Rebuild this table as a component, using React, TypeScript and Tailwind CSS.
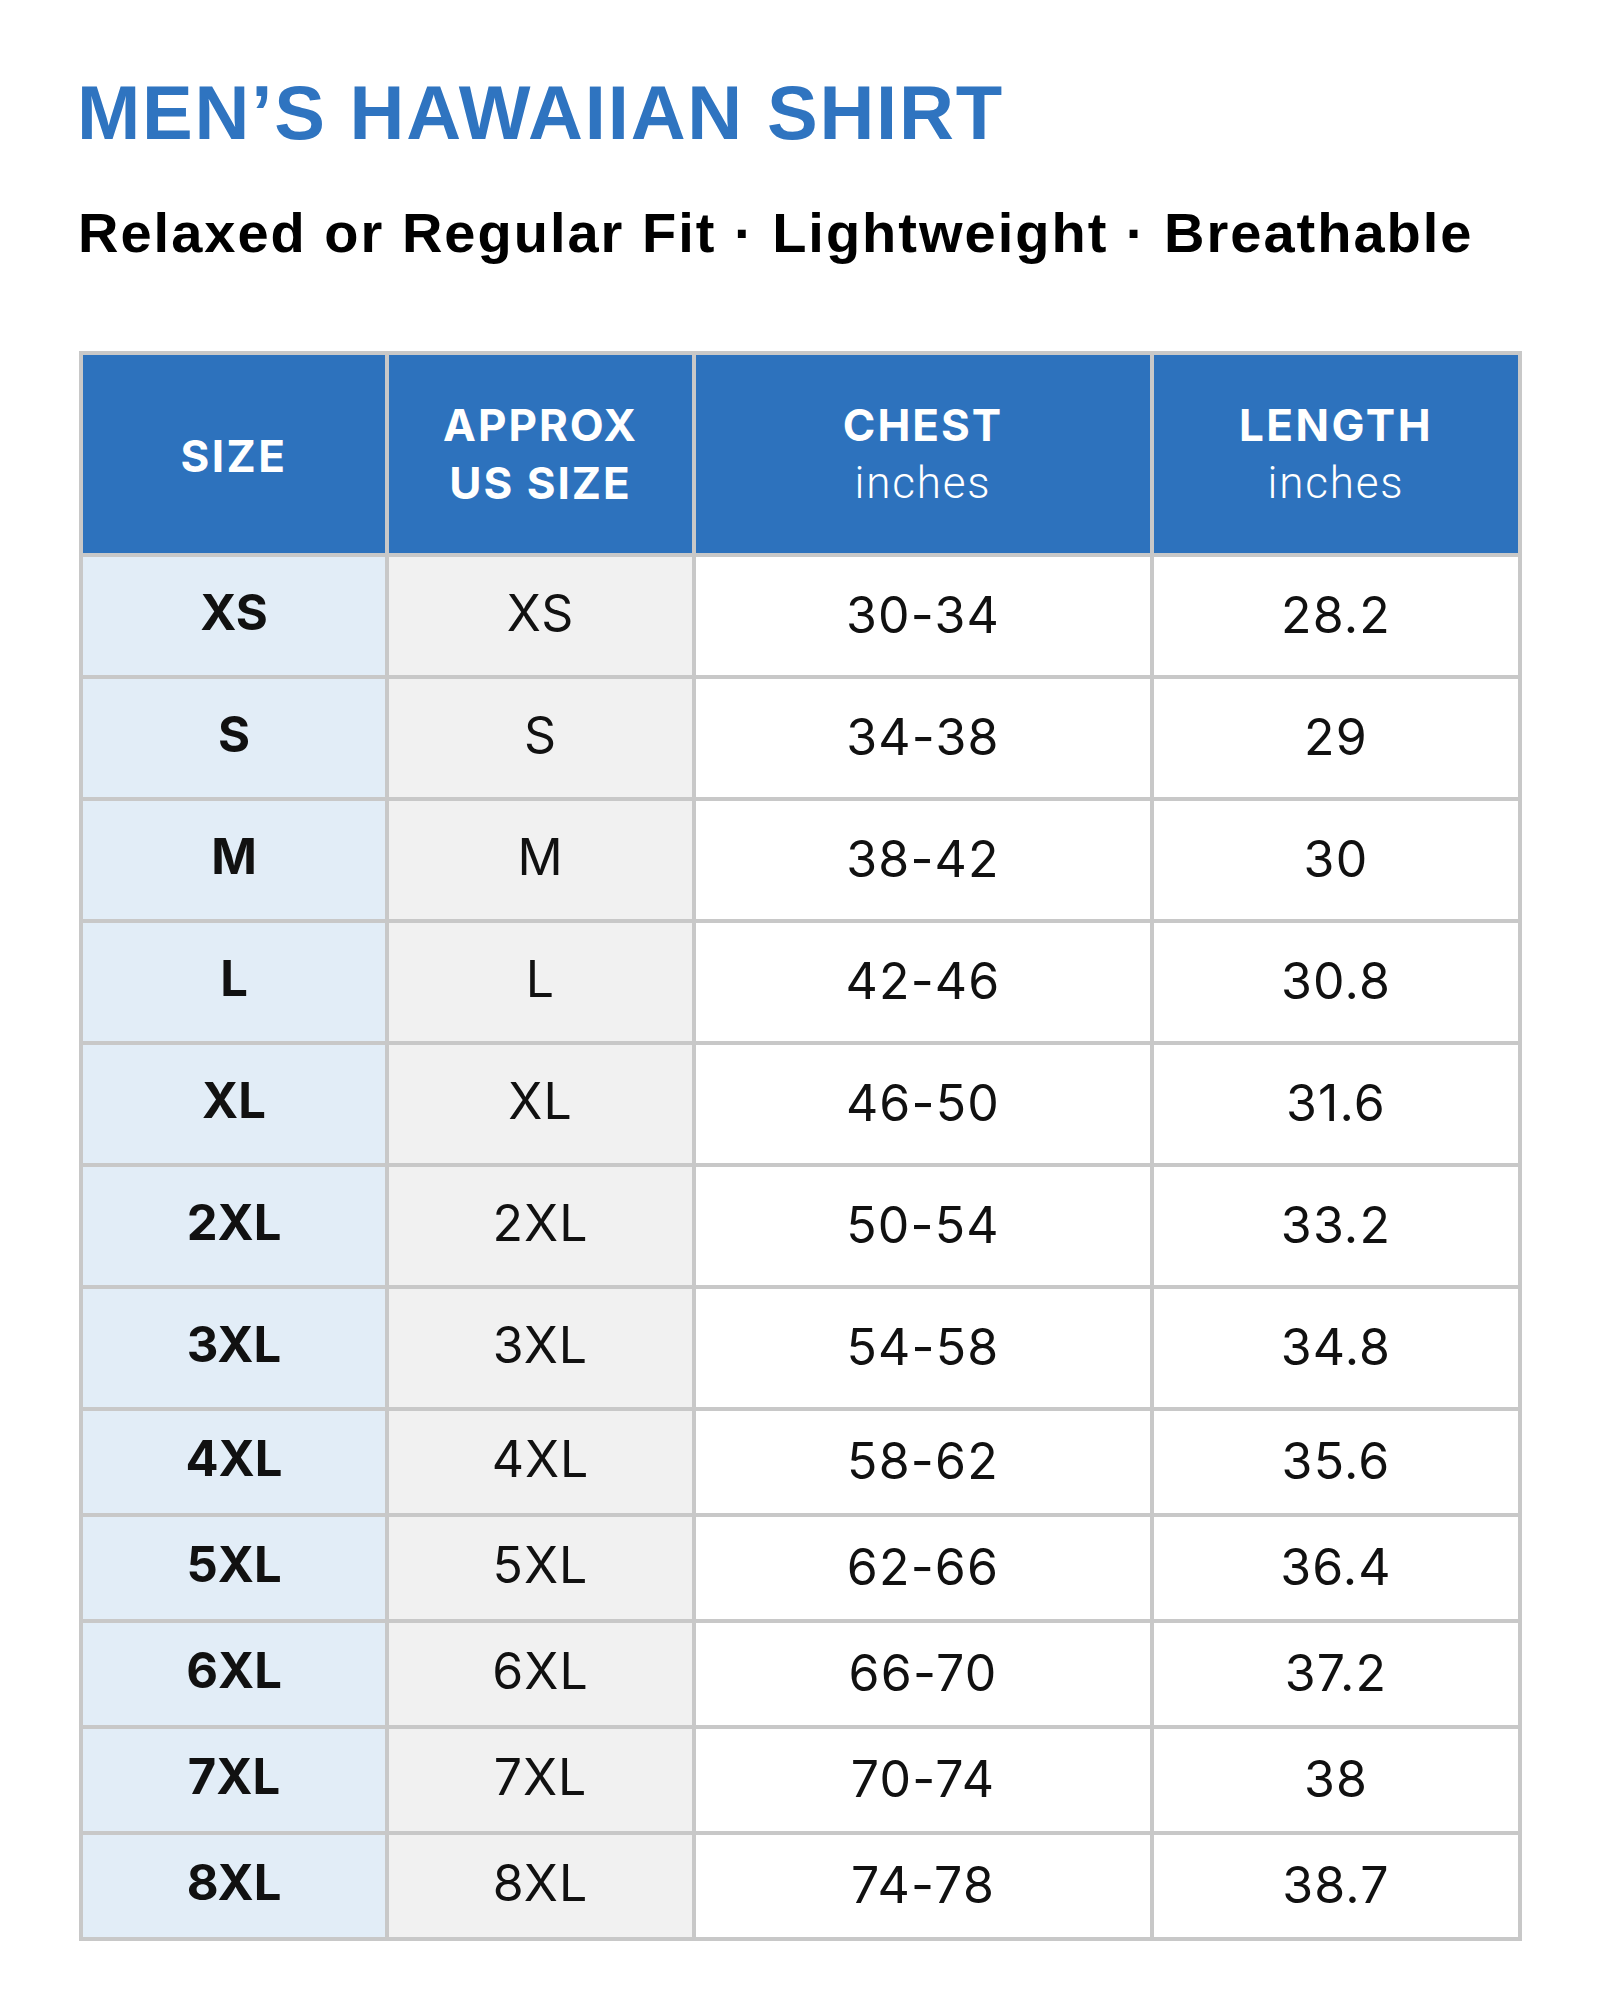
import React from "react";

const rows: [string, string, string, string][] = [
  ["XS", "XS", "30-34", "28.2"],
  ["S", "S", "34-38", "29"],
  ["M", "M", "38-42", "30"],
  ["L", "L", "42-46", "30.8"],
  ["XL", "XL", "46-50", "31.6"],
  ["2XL", "2XL", "50-54", "33.2"],
  ["3XL", "3XL", "54-58", "34.8"],
  ["4XL", "4XL", "58-62", "35.6"],
  ["5XL", "5XL", "62-66", "36.4"],
  ["6XL", "6XL", "66-70", "37.2"],
  ["7XL", "7XL", "70-74", "38"],
  ["8XL", "8XL", "74-78", "38.7"],
];

export default function App() {
  return (
    <div className="min-h-screen w-[1600px] bg-white pl-[79px] pt-[75px]">
      <h1 className="h-[76px] -ml-[2px] text-[76px] leading-none font-bold tracking-[1.8px] text-[#2f74c0] font-['Liberation_Sans',Arial,sans-serif] whitespace-nowrap">
        MEN’S HAWAIIAN SHIRT
      </h1>
      <p className="mt-[54px] h-[56px] -ml-[1px] text-[56px] leading-none font-bold tracking-[2px] text-black font-['Liberation_Sans',Arial,sans-serif] whitespace-nowrap">
        Relaxed or Regular Fit · Lightweight · Breathable
      </p>
      <div className="mt-[90px] w-fit grid grid-cols-[302px_303px_454px_364px] grid-rows-[198px_repeat(7,118px)_repeat(5,102px)] gap-[4px] p-[4px] bg-[#c8c8c8] font-['Inter',sans-serif]">
        <div className="bg-[#2d72bd] flex items-center justify-center text-white font-bold text-[44px] leading-[58px] tracking-[2.5px] pt-[4px]">
          SIZE
        </div>
        <div className="bg-[#2d72bd] flex flex-col items-center justify-center text-white font-bold text-[44px] leading-[58px] tracking-[2px] text-center">
          <span>APPROX</span>
          <span>US SIZE</span>
        </div>
        <div className="bg-[#2d72bd] flex flex-col items-center justify-center text-white text-center">
          <span className="font-bold text-[44px] leading-[58px] tracking-[2px]">CHEST</span>
          <span className="font-light text-[44px] leading-[58px] font-['Roboto',sans-serif] tracking-[1.8px]">inches</span>
        </div>
        <div className="bg-[#2d72bd] flex flex-col items-center justify-center text-white text-center">
          <span className="font-bold text-[44px] leading-[58px] tracking-[2.5px]">LENGTH</span>
          <span className="font-light text-[44px] leading-[58px] font-['Roboto',sans-serif] tracking-[1.8px]">inches</span>
        </div>
        {rows.map((r) => (
          <React.Fragment key={r[0]}>
            <div className="bg-[#e2edf7] flex items-center justify-center pb-[8px] text-[49px] leading-none font-bold text-[#111]">
              {r[0]}
            </div>
            <div className="bg-[#f1f1f1] flex items-center justify-center pb-[6px] text-[50px] leading-none font-normal tracking-[1px] text-[#111]">
              {r[1]}
            </div>
            <div className="bg-white flex items-center justify-center pb-[3px] text-[50px] leading-none font-normal tracking-[1.2px] text-[#111]">
              {r[2]}
            </div>
            <div className="bg-white flex items-center justify-center pb-[3px] text-[50px] leading-none font-normal tracking-[1.2px] text-[#111]">
              {r[3]}
            </div>
          </React.Fragment>
        ))}
      </div>
    </div>
  );
}
